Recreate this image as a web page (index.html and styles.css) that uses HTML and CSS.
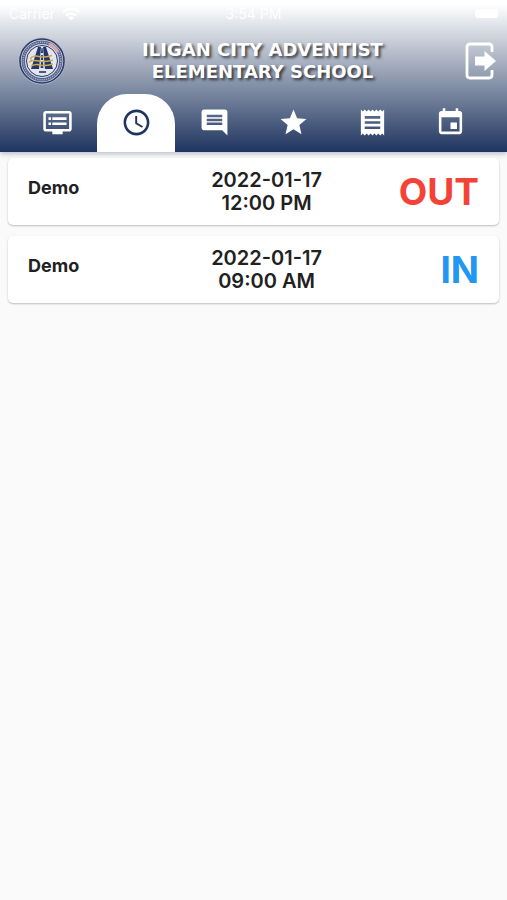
FILE: index.html
```
<!DOCTYPE html>
<html lang="en">
<head>
    <meta charset="UTF-8">
    <meta name="viewport" content="width=device-width, initial-scale=1.0">
    <title>Iligan City Adventist Elementary School</title>
    <link rel="stylesheet" href="styles.css">
</head>
<body>
    <header class="header">
        <div class="status">
            <div class="carrier">
                <span>Carrier</span>
                <svg width="18" height="14" viewBox="0 0 18 14" fill="none" stroke="#fff" stroke-width="2.4">
                    <path d="M1 5a11.500 11.500 0 0 1 16 0M4 8.500a7.500 7.500 0 0 1 10 0"/>
                    <path d="M9 13.500L6 10.600a4.500 4.500 0 0 1 6 0z" fill="#fff" stroke="none"/>
                </svg>
            </div>
            <span>3:54 PM</span>
            <div class="battery-side"><span class="battery"></span></div>
        </div>

        <div class="title-bar">
            <svg class="logo" viewBox="0 0 48 48">
                <circle cx="24" cy="24" r="23.500" fill="#b9bfcd"/>
                <circle cx="24" cy="24" r="22" fill="#d5d8e2" stroke="#2b3c6b" stroke-width="1.600"/>
                <circle cx="24" cy="24" r="18.800" fill="none" stroke="#53618a" stroke-width="3.400"/>
                <circle cx="24" cy="24" r="18.800" fill="none" stroke="#a9b1c8" stroke-width="1.500" stroke-dasharray="1.200 1"/>
                <path d="M31 7a19 19 0 0 1 9 8" fill="none" stroke="#d9a6ae" stroke-width="3"/>
                <circle cx="24" cy="24" r="15.500" fill="#e3e6ef" stroke="#26386a"/>
                <path d="M20 10h3l-2 22h-8zM25 10h3l7 22h-8z" fill="#22376b"/>
                <path d="M23.500 11h1l.5 5h-2zM23.200 18h1.600l.4 5h-2.400zM23 25h2l.4 6h-2.800z" fill="#22376b"/>
                <path d="M13 20.500q4-2.500 8-1t13-1M11 25q5-2.500 10-1t14-1M13 29q5-2.500 9-1t13-1M13 20v4" fill="none" stroke="#d3a847" stroke-width="1.400"/>
                <path d="M21 35h7" stroke="#4b5879" stroke-width="2"/>
            </svg>
            <h1>ILIGAN CITY ADVENTIST<br>ELEMENTARY SCHOOL</h1>
            <button class="logout" aria-label="Log out">
                <svg width="32" height="38" viewBox="0 0 32 38">
                    <path d="M27 10V5q0-3-3-3H5Q2 2 2 5v28q0 3 3 3h19q3 0 3-3v-5" fill="none" stroke="#fff" stroke-width="2.800"/>
                    <path d="M10 14.500h9.500V9L31 19l-11.500 10v-5.500H10z" fill="#fff"/>
                </svg>
            </button>
        </div>

        <nav class="tabs">
            <button class="tab" aria-label="Feed">
                <svg viewBox="0 0 24 24"><path d="M21 3H3c-1.100 0-2 .9-2 2v12c0 1.100.9 2 2 2h5v2h8v-2h5c1.100 0 2-.9 2-2V5c0-1.100-.9-2-2-2zm0 14H3V5h18v12zm-2-9H8v2h11V8zm0 4H8v2h11v-2zM7 8H5v2h2V8zm0 4H5v2h2v-2z"/></svg>
            </button>
            <button class="tab active" aria-label="Attendance">
                <svg viewBox="0 0 24 24"><path d="M11.990 2C6.470 2 2 6.480 2 12s4.470 10 9.990 10C17.520 22 22 17.520 22 12S17.520 2 11.990 2zM12 20c-4.420 0-8-3.580-8-8s3.580-8 8-8 8 3.580 8 8-3.580 8-8 8zm.5-13H11v6l5.250 3.150.75-1.230-4.500-2.670z"/></svg>
            </button>
            <button class="tab" aria-label="Messages">
                <svg viewBox="0 0 24 24"><path d="M21.990 4c0-1.100-.89-2-1.990-2H4c-1.100 0-2 .9-2 2v12c0 1.100.9 2 2 2h14l4 4-.01-18zM18 14H6v-2h12v2zm0-3H6V9h12v2zm0-3H6V6h12v2z"/></svg>
            </button>
            <button class="tab" aria-label="Grades">
                <svg viewBox="0 0 24 24"><path d="M12 17.270L18.180 21l-1.640-7.030L22 9.240l-7.190-.61L12 2 9.190 8.630 2 9.240l5.460 4.730L5.820 21z"/></svg>
            </button>
            <button class="tab" aria-label="Receipts">
                <svg viewBox="0 0 24 24"><path d="M18 17H6v-2h12v2zm0-4H6v-2h12v2zm0-4H6V7h12v2zM3 22l1.500-1.500L6 22l1.500-1.500L9 22l1.500-1.500L12 22l1.500-1.500L15 22l1.500-1.500L18 22l1.500-1.500L21 22V2l-1.500 1.500L18 2l-1.500 1.500L15 2l-1.500 1.500L12 2l-1.500 1.500L9 2 7.500 3.500 6 2 4.500 3.500 3 2v20z"/></svg>
            </button>
            <button class="tab" aria-label="Calendar">
                <svg viewBox="0 0 24 24"><path d="M17 12h-5v5h5v-5zM16 1v2H8V1H6v2H5c-1.110 0-1.990.9-1.990 2L3 19c0 1.100.89 2 2 2h14c1.100 0 2-.9 2-2V5c0-1.100-.9-2-2-2h-1V1h-2zm3 18H5V8h14v11z"/></svg>
            </button>
        </nav>
    </header>

    <main class="list">
        <div class="card">
            <span class="name">Demo</span>
            <span class="date">2022-01-17<br>12:00 PM</span>
            <span class="state out">OUT</span>
        </div>
        <div class="card">
            <span class="name">Demo</span>
            <span class="date">2022-01-17<br>09:00 AM</span>
            <span class="state in">IN</span>
        </div>
    </main>
</body>
</html>
```
FILE: styles.css
```
body {
    margin: 0;
    background-color: #fafafa;
    font-family: Inter, "Liberation Sans", sans-serif;
    color: #212121;
}
button {
    padding: 0;
    border: none;
    background: none;
    cursor: pointer;
}
svg {
    display: block;
}
.header {
    background: linear-gradient(#ffffff 3%, #1f355f);
    box-shadow: 0 2px 5px rgba(30, 60, 100, 0.3);
    color: white;
}
.status {
    display: grid;
    grid-template-columns: 1fr auto 1fr;
    align-items: center;
    height: 27px;
    padding: 0 9px;
    font-size: 14px;
}
.carrier {
    display: flex;
    align-items: center;
    gap: 7px;
}
.battery-side {
    display: flex;
    justify-content: flex-end;
}
.battery {
    width: 23px;
    height: 9px;
    border-radius: 3px;
    background-color: white;
}
.title-bar {
    display: flex;
    align-items: center;
    justify-content: space-between;
    height: 67px;
    padding: 0 10px 0 18px;
}
.logo {
    width: 48px;
    height: 48px;
}
h1 {
    flex: 1;
    margin: 0;
    padding-right: 6px;
    font-family: "DejaVu Sans", sans-serif;
    font-size: 18px;
    line-height: 22px;
    text-align: center;
    text-shadow: 2px 2px 3px rgba(0, 0, 0, 0.7);
}
.tabs {
    display: flex;
    padding: 0 17px 0 18px;
}
.tab {
    display: flex;
    flex: 1;
    align-items: center;
    justify-content: center;
    height: 58px;
    padding-bottom: 2px;
    fill: white;
}
.tab svg {
    width: 31px;
    height: 31px;
}
.tab.active {
    border-radius: 30px 30px 0 0;
    background-color: white;
    fill: #1f355f;
}
.list {
    display: flex;
    flex-direction: column;
    gap: 11px;
    padding: 6px 8px;
}
.card {
    display: grid;
    grid-template-columns: 7fr auto 6fr;
    align-items: center;
    height: 67px;
    padding: 0 20px;
    border-radius: 5px;
    background-color: white;
    box-shadow: 0 1px 2px rgba(0, 0, 0, 0.25);
    font-weight: 700;
}
.name {
    align-self: start;
    padding-top: 18px;
    font-size: 18px;
    line-height: 23px;
}
.date {
    font-size: 20px;
    line-height: 23px;
    font-weight: 600;
    text-align: center;
}
.state {
    font-size: 37px;
    text-align: right;
}
.out {
    color: #f44336;
}
.in {
    color: #2196f3;
}
```
